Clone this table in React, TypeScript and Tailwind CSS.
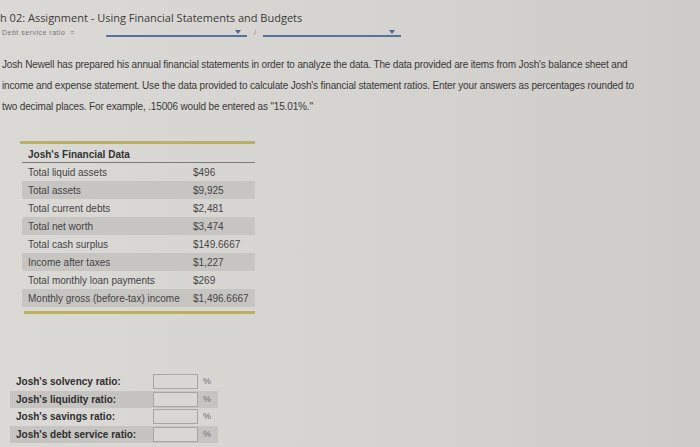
import React from 'react'

const data = [
    ['Total liquid assets', '$496'],
    ['Total assets', '$9,925'],
    ['Total current debts', '$2,481'],
    ['Total net worth', '$3,474'],
    ['Total cash surplus', '$149.6667'],
    ['Income after taxes', '$1,227'],
    ['Total monthly loan payments', '$269'],
    ['Monthly gross (before-tax) income', '$1,496.6667'],
]

const ratios = [
    "Josh's solvency ratio:",
    "Josh's liquidity ratio:",
    "Josh's savings ratio:",
    "Josh's debt service ratio:",
]

function Caret() {
    return <span className="mb-[1px] ml-auto mr-[6px] h-0 w-0 border-x-[3px] border-t-[4px] border-x-transparent border-t-[#4a6a9a]" />
}

export default function App() {
    return (
        <div
            className="relative h-[447px] w-[700px] overflow-hidden bg-gradient-to-r from-[#dbd9d5] via-[#d6d4d0] to-[#cecbc8] text-[#2e2e2e]"
            style={{ fontFamily: '"Liberation Sans", Arial, sans-serif' }}
        >
            <div className="pt-[10px] text-[11px] leading-[15px] text-[#3a3a3a]" style={{ fontFamily: '"Open Sans", sans-serif' }}>
                h 02: Assignment - Using Financial Statements and Budgets
            </div>
            <div className="flex h-[12px] items-end text-[7px] leading-[8px] text-[#777]">
                <span className="ml-[2px] w-[104px] overflow-hidden whitespace-nowrap tracking-[0.5px]">Debt service ratio &nbsp;=</span>
                <span className="flex h-[8px] w-[141px] items-end border-b-2 border-[#56739e]">
                    <Caret />
                </span>
                <span className="mx-[7px] text-[#888]">/</span>
                <span className="flex h-[8px] w-[138px] items-end border-b-2 border-[#56739e]">
                    <Caret />
                </span>
            </div>

            <p className="mt-[17px] w-[640px] pl-[2px] text-[10px] leading-[21px] tracking-[-0.15px] text-[#383838]">
                Josh Newell has prepared his annual financial statements in order to analyze the data. The data provided are items from Josh's balance sheet and
                income and expense statement. Use the data provided to calculate Josh's financial statement ratios. Enter your answers as percentages rounded to
                two decimal places. For example, .15006 would be entered as "15.01%."
            </p>

            <div className="ml-[20px] mt-[24px] w-[235px]">
                <div className="h-[3px] bg-[#b9b063]" />
                <div className="ml-[2px] border-b border-[#7a7a7a] pb-[1px] pl-[6px] pt-[5px] text-[10px] font-bold leading-[12px] text-[#333]">
                    Josh's Financial Data
                </div>
                <div className="ml-[2px]">
                    {data.map(([label, value], i) => (
                        <div
                            key={label}
                            className={`flex h-[18px] items-center text-[10px] text-[#444] ${i % 2 === 1 ? 'bg-[#c7c5c1]' : ''}`}
                        >
                            <span className="w-[171px] pl-[6px]">{label}</span>
                            <span>{value}</span>
                        </div>
                    ))}
                </div>
                <div className="ml-[4px] mt-[4px] h-[3px] bg-[#b9b063]" />
            </div>

            <div className="ml-[10px] mt-[59px] w-[208px]">
                {ratios.map((label, i) => (
                    <div key={label} className={`flex h-[17.5px] items-center ${i % 2 === 1 ? 'bg-[#c6c4c0]' : ''}`}>
                        <span className="w-[143px] pl-[6px] text-[10px] font-bold text-[#2e2e2e]">{label}</span>
                        <span className="h-[15px] w-[45px] border border-[#a8a6a3] bg-[#d9d7d3]" />
                        <span className="ml-[5px] text-[9px] text-[#707070]">%</span>
                    </div>
                ))}
            </div>
        </div>
    )
}
